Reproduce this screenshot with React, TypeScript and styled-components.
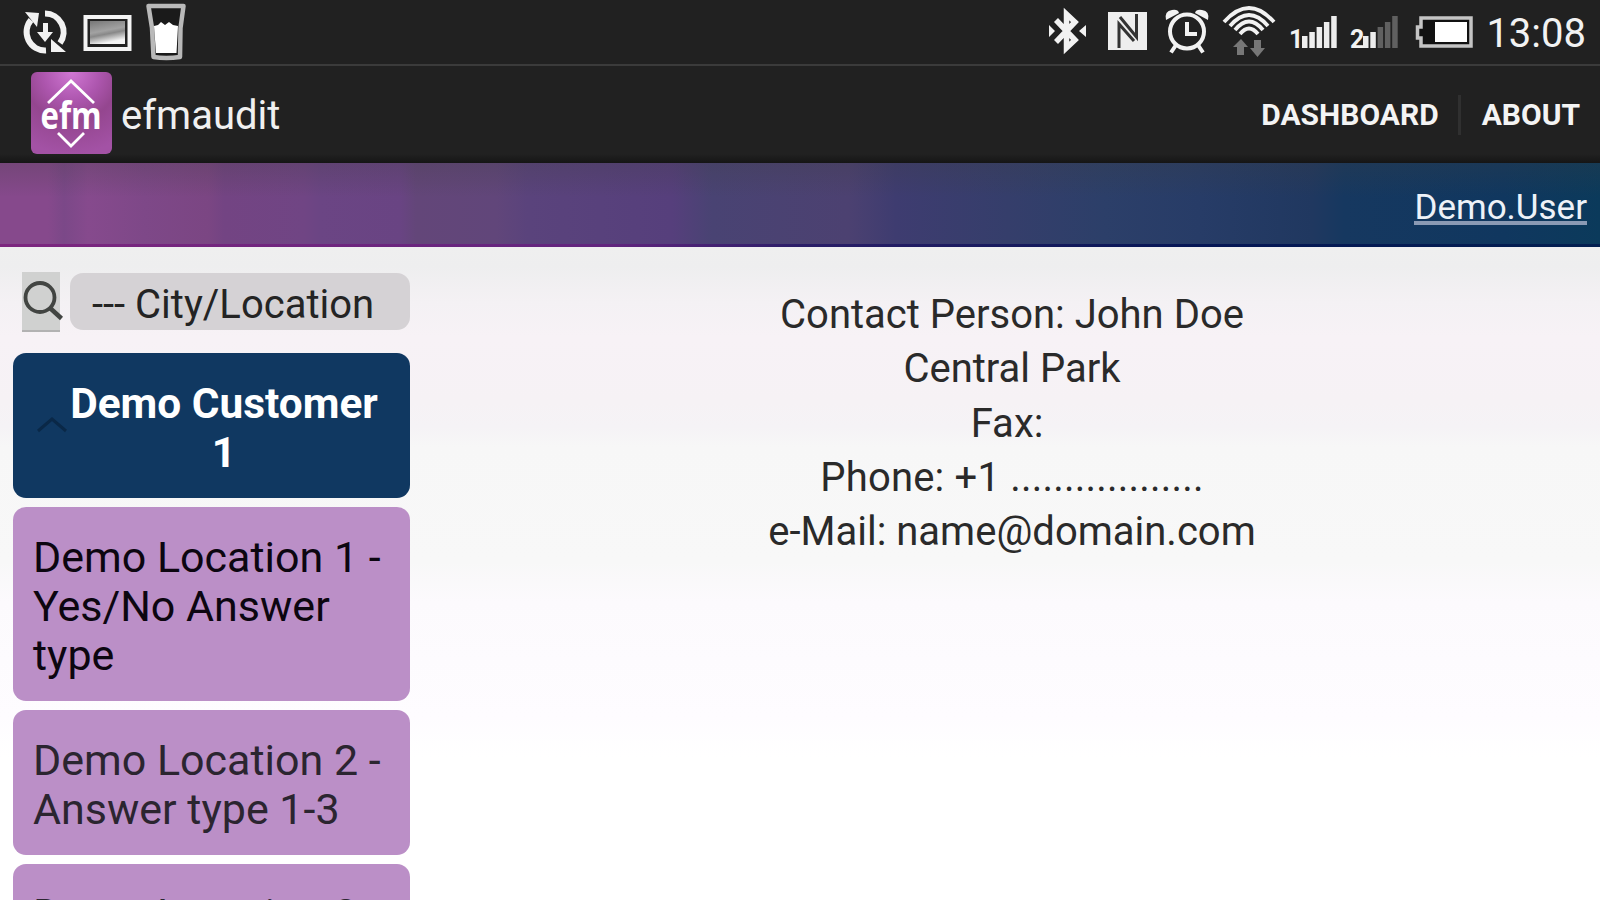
import React from 'react';
import styled, { createGlobalStyle } from 'styled-components';

const GlobalStyle = createGlobalStyle`
  * { box-sizing: border-box; }
  body {
    margin: 0;
    overflow: hidden;
    font-family: Roboto, "Liberation Sans", sans-serif;
  }
`;

const Screen = styled.div`
  display: flex;
  flex-direction: column;
  width: 1600px;
  height: 900px;
  overflow: hidden;
  background: #fff;
`;

const StatusBar = styled.header`
  display: flex;
  align-items: flex-start;
  justify-content: space-between;
  flex: none;
  height: 66px;
  padding: 0 14px 0 20px;
  background: #212121;
  border-bottom: 2px solid #3b3b3b;
`;

const IconGroup = styled.div<{ $gap: number }>`
  display: flex;
  align-items: flex-start;
  gap: ${({ $gap }) => $gap}px;
`;

const StatusIcon = styled.svg`
  display: block;
  flex: none;
  height: 64px;
  overflow: visible;
`;

const Clock = styled.span`
  color: #f2f2f2;
  font-size: 40px;
  line-height: 68px;
`;

const ActionBar = styled.div`
  display: flex;
  align-items: center;
  flex: none;
  height: 97px;
  padding: 0 20px 0 31px;
  background: linear-gradient(#212121 0, #212121 88px, #151515 97px);
`;

const Logo = styled.svg`
  display: block;
  width: 81px;
  height: 82px;
  margin-top: -3px;
  overflow: visible;
`;

const AppTitle = styled.h1`
  flex: 1;
  margin: 2px 0 0 9px;
  color: #f0f0f0;
  font-size: 40px;
  font-weight: 400;
  line-height: 97px;
`;

const Action = styled.a`
  color: #f4f4f4;
  font-size: 30px;
  font-weight: 700;
  line-height: 97px;
`;

const Divider = styled.span`
  width: 3px;
  height: 40px;
  margin: 0 21px 0 19px;
  background: #303030;
`;

const Banner = styled.div`
  display: flex;
  justify-content: flex-end;
  flex: none;
  height: 84px;
  padding: 26px 13px 0 0;
  background:
    linear-gradient(90deg, #7d267f, #62257e 38%, #2b1e68 50%, #051655 75%, #031f50) 0 100% / 100% 3px no-repeat,
    linear-gradient(rgba(60, 60, 60, 0.24), rgba(60, 60, 60, 0) 34px),
    linear-gradient(90deg,
      #86498c 0, #86498c 3%, #7b4888 4%, #864a8d 5.5%,
      #7e4888 9%, #7b4683 13%, #734483 14%, #704584 19%,
      #6b4584 20%, #694483 25%, #634679 26%, #61467a 31%,
      #5a437c 33%, #563f7c 42%, #494373 44.5%, #4c4171 53%,
      #3e3c70 56%, #353e6b 63%, #2c3f69 69%, #273c67 75%,
      #203860 82%, #163860 84%, #10375f 94%, #0b3a5b 100%);
`;

const UserLink = styled.a`
  height: 36px;
  color: #eef2f8;
  font-size: 35px;
  line-height: 38px;
  border-bottom: 4px solid #8b9ab4;
`;

const Page = styled.main`
  display: flex;
  flex: 1;
  min-height: 0;
  padding: 25px 0 0 13px;
  background: linear-gradient(
    #efefef 0, #eeeeef 20px, #f4f1f4 55px, #f7f2f6 90px,
    #f6f2f5 155px, #f5f3f6 180px, #f7f7f7 200px, #f8f8f8 315px,
    #fcfafd 355px, #fefcff 470px, #fff 510px
  );
`;

const Sidebar = styled.aside`
  display: flex;
  flex-direction: column;
  flex: none;
  width: 397px;
`;

const SearchRow = styled.div`
  display: flex;
  gap: 10px;
  flex: none;
  height: 60px;
  margin-bottom: 21px;
  padding-left: 9px;
`;

const SearchButton = styled.button`
  width: 38px;
  height: 60px;
  padding: 0;
  border: 0;
  border-bottom: 2px solid #b2b2b2;
  background: #d0d1d0;
`;

const SearchIcon = styled.svg`
  display: block;
  width: 42px;
  height: 58px;
  overflow: visible;
`;

const LocationSelect = styled.div`
  flex: 1;
  height: 57px;
  margin-top: 1px;
  padding-left: 22px;
  border-radius: 13px;
  background: #d5d2d5;
  color: #242424;
  font-size: 40px;
  line-height: 63px;
  white-space: nowrap;
`;

const CustomerHeader = styled.div`
  display: flex;
  align-items: center;
  flex: none;
  height: 145px;
  padding-left: 23px;
  border-radius: 13px;
  background: #103861;
`;

const CustomerName = styled.h2`
  width: 320px;
  margin: 5px 0 0 -4px;
  color: #fff;
  font-size: 42.4px;
  font-weight: 700;
  line-height: 49px;
  text-align: center;
`;

const LocationCard = styled.div<{ $height: number; $active?: boolean }>`
  flex: none;
  height: ${({ $height }) => $height}px;
  margin-top: 9px;
  padding: 26px 16px 0 20px;
  border-radius: 13px;
  background: #bb8fc7;
  color: ${({ $active }) => ($active ? '#0c0610' : '#2b2530')};
  font-size: 43px;
  line-height: 49px;
`;

const ContactPanel = styled.section`
  flex: 1;
  padding: 16px 0 0 14px;
  color: #2a2a2a;
  font-size: 40px;
  line-height: 54.3px;
  text-align: center;
`;

const ContactLine = styled.div<{ $spacing?: number }>`
  letter-spacing: ${({ $spacing = 0 }) => $spacing}px;
  white-space: nowrap;
`;

const locations = [
  { lines: ['Demo Location 1 -', 'Yes/No Answer', 'type'], height: 194, active: true },
  { lines: ['Demo Location 2 -', 'Answer type 1-3'], height: 145 },
  { lines: ['Demo Location 3 -'], height: 145 },
];

const SyncIcon = () => (
  <StatusIcon width={50} viewBox="20 0 50 64">
    <g fill="none" stroke="#f2f2f2" strokeWidth={6}>
      <path d="M45 13.500A18.500 18.500 0 0 1 60 43" />
      <path d="M46 50.500A18.500 18.500 0 0 1 31 20" />
      <path d="M45.500 23V34" strokeWidth={5} />
    </g>
    <path d="M25 12L39 13L37 27Z M51 39V52H66Z M37 32H53L45 42Z" fill="#f2f2f2" />
  </StatusIcon>
);

const PictureIcon = () => (
  <StatusIcon width={49} viewBox="81 0 49 64">
    <defs>
      <linearGradient id="photo" x1="0" y1="0" x2="0.3" y2="1">
        <stop offset="0" stopColor="#777" />
        <stop offset="0.5" stopColor="#a2a2a2" />
        <stop offset="0.65" stopColor="#888" />
        <stop offset="1" stopColor="#f4f4f4" />
      </linearGradient>
    </defs>
    <rect x={83.500} y={17} width={44} height={32} fill="#222" stroke="#f4f4f4" strokeWidth={4} />
    <rect x={88} y={21} width={35} height={23} fill="url(#photo)" />
  </StatusIcon>
);

const GlassIcon = () => (
  <StatusIcon width={42} viewBox="144 0 42 64">
    <path d="M147.500 6H182.500L179.500 28L179 57Q165 59 152.500 57L151 28Z" fill="#1a1a1a" stroke="#b9b9b9" strokeWidth={4.500} strokeLinejoin="round" />
    <path d="M153 26L157 25L160 22L164 25L168 22L172 25L177 26L175.500 53H155Z" fill="#fff" />
  </StatusIcon>
);

const BluetoothIcon = () => (
  <StatusIcon width={47} viewBox="1048 0 47 64">
    <path d="M1056 20L1075 40L1066.500 48V14L1075 22L1056 42" fill="none" stroke="#f2f2f2" strokeWidth={5.500} />
    <path d="M1049 25L1055 31L1049 37Z M1086 25L1079 31L1086 37Z" fill="#f2f2f2" />
  </StatusIcon>
);

const NfcIcon = () => (
  <StatusIcon width={45} viewBox="1107 0 45 64">
    <path d="M1108 12H1147V50H1108Z" fill="#eee" />
    <path d="M1119 48V24L1134 41 M1136.500 14V37L1120 17" fill="none" stroke="#333" strokeWidth={3} />
  </StatusIcon>
);

const AlarmIcon = () => (
  <StatusIcon width={46} viewBox="1164 0 46 64">
    <g fill="none" stroke="#f2f2f2" strokeWidth={4}>
      <circle cx={1187} cy={31.500} r={17} />
      <path d="M1187 22V34H1197 M1176 45L1171 52.500 M1198 45L1203 52.500" />
    </g>
    <path d="M1166 20Q1164 11 1172 10Q1178 9 1179 13Z M1208 20Q1210 11 1202 10Q1196 9 1195 13Z" fill="#f2f2f2" />
  </StatusIcon>
);

const WifiIcon = () => (
  <StatusIcon width={55} viewBox="1222 0 55 64">
    <g fill="none" stroke="#f2f2f2" strokeWidth={3.800}>
      <path d="M1224 22Q1249 -6 1274 22" />
      <path d="M1230 26Q1249 4 1268 26" />
      <path d="M1235 30Q1249 13 1263 30" />
      <path d="M1240 34Q1249 23 1258 34" />
    </g>
    <path d="M1233 47L1241 39L1248 47H1244V55H1237V47Z M1250 48H1254V40H1261V48H1265L1257.500 57Z" fill="#777" />
  </StatusIcon>
);

const barHeights = [12, 16, 21, 26, 32];

interface SignalProps {
  sim: string;
  strength: number;
}

const SignalIcon: React.FC<SignalProps> = ({ sim, strength }) => (
  <StatusIcon width={49} viewBox="0 0 49 64">
    <text x={0} y={47.500} fill="#f2f2f2" fontSize={25} fontWeight={700}>
      {sim}
    </text>
    {barHeights.map((height, i) => (
      <rect key={height} x={13 + i * 7.300} y={48 - height} width={5.500} height={height} fill={i < strength ? '#ededed' : '#606060'} />
    ))}
  </StatusIcon>
);

const BatteryIcon = () => (
  <StatusIcon width={63} viewBox="1411 0 63 64">
    <path d="M1421 18H1471V46H1421V38H1417.500V27H1421Z" fill="#111" stroke="#c4c4c4" strokeWidth={3.500} />
    <rect x={1435} y={22} width={32} height={20} fill="#fff" />
  </StatusIcon>
);

const App: React.FC = () => (
  <>
    <GlobalStyle />
    <Screen>
      <StatusBar>
        <IconGroup $gap={13}>
          <SyncIcon />
          <PictureIcon />
          <GlassIcon />
        </IconGroup>
        <IconGroup $gap={12}>
          <BluetoothIcon />
          <NfcIcon />
          <AlarmIcon />
          <WifiIcon />
          <SignalIcon sim="1" strength={5} />
          <SignalIcon sim="2" strength={2} />
          <BatteryIcon />
          <Clock>13:08</Clock>
        </IconGroup>
      </StatusBar>

      <ActionBar>
        <Logo viewBox="0 0 81 82">
          <defs>
            <radialGradient id="logo" cx="0.5" cy="0" r="1">
              <stop offset="0" stopColor="#d077d3" />
              <stop offset="0.35" stopColor="#ad56ae" />
              <stop offset="0.6" stopColor="#94468f" />
              <stop offset="1" stopColor="#a352a5" />
            </radialGradient>
          </defs>
          <rect width={81} height={82} rx={6} fill="url(#logo)" />
          <path d="M17 31L40 9L63 31 M27 61L40 74L53 61" fill="none" stroke="#fff" strokeWidth={2.800} />
          <text x={9.500} y={56.500} fill="#fff" fontFamily="Open Sans, sans-serif" fontSize={38} fontWeight={700} textLength={61} lengthAdjust="spacingAndGlyphs">
            efm
          </text>
        </Logo>
        <AppTitle>efmaudit</AppTitle>
        <Action>DASHBOARD</Action>
        <Divider />
        <Action>ABOUT</Action>
      </ActionBar>

      <Banner>
        <UserLink>Demo.User</UserLink>
      </Banner>

      <Page>
        <Sidebar>
          <SearchRow>
            <SearchButton aria-label="Search">
              <SearchIcon viewBox="0 0 42 58">
                <g fill="none" stroke="#424542" strokeWidth={3.800}>
                  <circle cx={18} cy={25.500} r={14.500} />
                  <path d="M28 36L39.500 46.500" strokeWidth={4.500} />
                </g>
              </SearchIcon>
            </SearchButton>
            <LocationSelect>--- City/Location</LocationSelect>
          </SearchRow>

          <CustomerHeader>
            <svg width={32} height={18} viewBox="0 0 32 18">
              <path d="M2 14L16 2L30 14" fill="none" stroke="#0a2847" strokeWidth={3} />
            </svg>
            <CustomerName>
              Demo Customer
              <br />1
            </CustomerName>
          </CustomerHeader>

          {locations.map(({ lines, height, active }) => (
            <LocationCard key={lines[0]} $height={height} $active={active}>
              {lines.map((line) => (
                <div key={line}>{line}</div>
              ))}
            </LocationCard>
          ))}
        </Sidebar>

        <ContactPanel>
          <ContactLine>Contact Person: John Doe</ContactLine>
          <ContactLine>Central Park</ContactLine>
          <ContactLine>Fax:&nbsp;</ContactLine>
          <ContactLine $spacing={0.2}>Phone: +1 ..................</ContactLine>
          <ContactLine>e-Mail: name@domain.com</ContactLine>
        </ContactPanel>
      </Page>
    </Screen>
  </>
);

export default App;
